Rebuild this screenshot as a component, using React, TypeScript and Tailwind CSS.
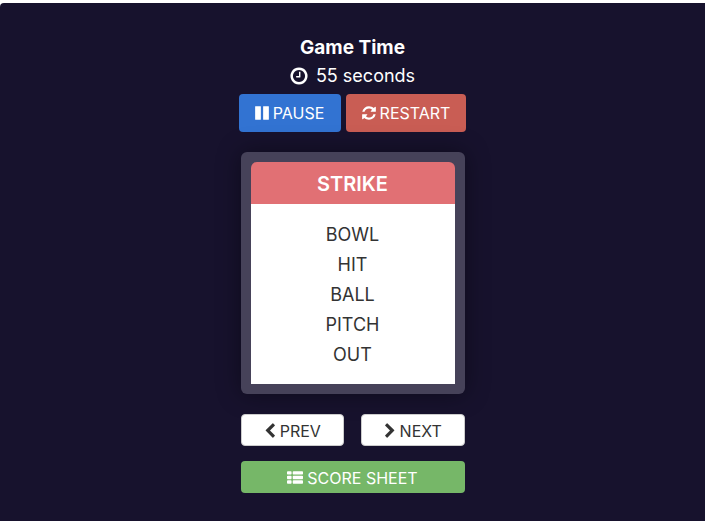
import { useState } from 'react';

interface IconProps {
  path: string;
  viewBox?: string;
  className?: string;
}

const icons = {
  clock:
    'M1024 544v448q0 14-9 23t-23 9h-320q-14 0-23-9t-9-23v-64q0-14 9-23t23-9h224v-352q0-14 9-23t23-9h64q14 0 23 9t9 23zm416 352q0-148-73-273t-198-198-273-73-273 73-198 198-73 273 73 273 198 198 273 73 273-73 198-198 73-273zm224 0q0 209-103 385.5t-279.5 279.5-385.5 103-385.5-103-279.5-279.5-103-385.5 103-385.5 279.5-279.5 385.5-103 385.5 103 279.5 279.5 103 385.5z',
  pause:
    'M1664 192v1408q0 26-19 45t-45 19h-512q-26 0-45-19t-19-45v-1408q0-26 19-45t45-19h512q26 0 45 19t19 45zm-896 0v1408q0 26-19 45t-45 19h-512q-26 0-45-19t-19-45v-1408q0-26 19-45t45-19h512q26 0 45 19t19 45z',
  refresh:
    'M1639 1056q0 5-1 7-64 268-268 434.5t-478 166.5q-146 0-282.5-55t-243.5-157l-129 129q-19 19-45 19t-45-19-19-45v-448q0-26 19-45t45-19h448q26 0 45 19t19 45-19 45l-137 137q71 66 161 102t187 36q134 0 250-65t186-179q11-17 53-117 8-23 30-23h192q13 0 22.5 9.5t9.5 22.5zm25-800v448q0 26-19 45t-45 19h-448q-26 0-45-19t-19-45 19-45l138-138q-148-137-349-137-134 0-250 65t-186 179q-11 17-53 117-8 23-30 23h-199q-13 0-22.5-9.5t-9.5-22.5v-7q65-268 270-434.5t480-166.5q146 0 284 55.5t245 156.5l130-129q19-19 45-19t45 19 19 45z',
  left:
    'M1427 301l-531 531 531 531q19 19 19 45t-19 45l-166 166q-19 19-45 19t-45-19l-742-742q-19-19-19-45t19-45l742-742q19-19 45-19t45 19l166 166q19 19 19 45t-19 45z',
  right:
    'M1363 877l-742 742q-19 19-45 19t-45-19l-166-166q-19-19-19-45t19-45l531-531-531-531q-19-19-19-45t19-45l166-166q19-19 45-19t45 19l742 742q19 19 19 45t-19 45z',
  list:
    'M512 1248v192q0 40-28 68t-68 28h-320q-40 0-68-28t-28-68v-192q0-40 28-68t68-28h320q40 0 68 28t28 68zM512 736v192q0 40-28 68t-68 28h-320q-40 0-68-28t-28-68v-192q0-40 28-68t68-28h320q40 0 68 28t28 68zM1792 1248v192q0 40-28 68t-68 28h-960q-40 0-68-28t-28-68v-192q0-40 28-68t68-28h960q40 0 68 28t28 68zM512 224v192q0 40-28 68t-68 28h-320q-40 0-68-28t-28-68v-192q0-40 28-68t68-28h320q40 0 68 28t28 68zM1792 736v192q0 40-28 68t-68 28h-960q-40 0-68-28t-28-68v-192q0-40 28-68t68-28h960q40 0 68 28t28 68zM1792 224v192q0 40-28 68t-68 28h-960q-40 0-68-28t-28-68v-192q0-40 28-68t68-28h960q40 0 68 28t28 68z',
};

const Icon = ({ path, viewBox = '128 0 1536 1792', className = 'h-4 w-3.5' }: IconProps) => (
  <svg viewBox={viewBox} fill="currentColor" className={className} aria-hidden="true">
    <path d={path} />
  </svg>
);

const cards = [{ word: 'STRIKE', taboo: ['BOWL', 'HIT', 'BALL', 'PITCH', 'OUT'] }];

const App = () => {
  const [paused, setPaused] = useState(false);
  const [index, setIndex] = useState(0);
  const card = cards[index];

  const move = (step: number) => setIndex((index + step + cards.length) % cards.length);

  return (
    <div className="min-h-screen bg-white pt-[3px] font-['Inter',sans-serif]">
      <main className="flex min-h-[calc(100vh-3px)] flex-col items-center rounded-tl bg-[#17122d] pt-[31px] pb-7">
        {/* Timer */}
        <section className="text-center text-lg leading-7 text-white">
          <h1 className="text-[19px] font-bold">Game Time</h1>
          <p className="flex items-center justify-center gap-2">
            <Icon path={icons.clock} className="h-5 w-[18px]" />
            55 seconds
          </p>
        </section>
        <div className="mt-1 flex gap-[5px] text-white">
          <button
            className="flex h-[38px] min-w-[102px] items-center justify-center gap-1 rounded bg-[#3273d2] px-4 text-base"
            aria-pressed={paused}
            onClick={() => setPaused(!paused)}
          >
            <Icon path={icons.pause} />
            PAUSE
          </button>
          <button
            className="flex h-[38px] min-w-[102px] items-center justify-center gap-1 rounded bg-[#c95d54] px-4 text-base"
            onClick={() => setIndex(0)}
          >
            <Icon path={icons.refresh} />
            RESTART
          </button>
        </div>

        {/* Word card */}
        <div className="mt-5 w-56">
          <article className="rounded-md bg-[#464259] p-2.5 text-center shadow-[0_0_24px_rgba(0,0,0,0.4)]">
            <h2 className="rounded-t-md bg-[#e17074] pt-0.5 text-xl leading-10 font-semibold text-white">
              {card.word}
            </h2>
            <ul className="bg-white pt-4 pb-3.5 text-lg leading-[30px] text-[#333333]">
              {card.taboo.map((word) => (
                <li key={word}>{word}</li>
              ))}
            </ul>
          </article>

          {/* Navigation */}
          <div className="mt-5 grid grid-cols-2 gap-[17px]">
            <button
              className="flex h-8 items-center justify-center gap-1 rounded border border-[#cccccc] bg-white pt-0.5 text-base text-[#333333]"
              onClick={() => move(-1)}
            >
              <Icon path={icons.left} viewBox="256 0 1280 1792" className="h-4 w-3" />
              PREV
            </button>
            <button
              className="flex h-8 items-center justify-center gap-1 rounded border border-[#cccccc] bg-white pt-0.5 text-base text-[#333333]"
              onClick={() => move(1)}
            >
              <Icon path={icons.right} viewBox="256 0 1280 1792" className="h-4 w-3" />
              NEXT
            </button>
          </div>
          <button className="mt-[15px] flex h-8 w-full items-center justify-center gap-1 rounded bg-[#76b768] pt-0.5 text-base text-white">
            <Icon path={icons.list} viewBox="0 0 1792 1792" className="size-4" />
            SCORE SHEET
          </button>
        </div>
      </main>
    </div>
  );
};

export default App;
